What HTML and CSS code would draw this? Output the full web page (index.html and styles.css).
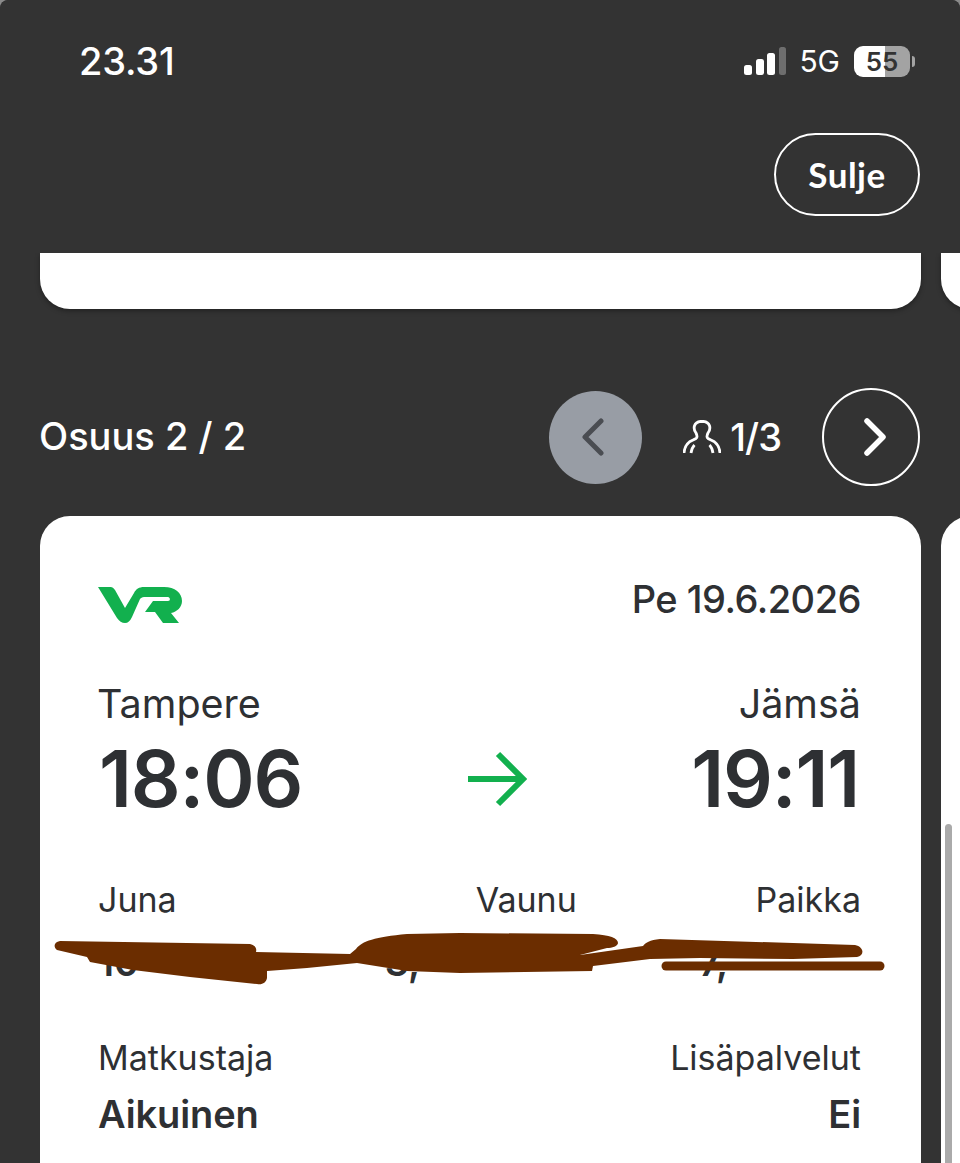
FILE: index.html
```html
<!DOCTYPE html>
<html lang="fi">
<head>
  <meta charset="utf-8">
  <title>Lippu</title>
  <link rel="stylesheet" href="styles.css">
</head>
<body>
  <header class="top">
    <div class="status">
      <span class="clock">23.31</span>
      <div class="status-icons">
        <svg class="signal" width="42" height="30" viewBox="0 0 42 30">
          <rect x="0" y="19" width="8" height="10" rx="2.5" fill="#fff"/>
          <rect x="12" y="13" width="8" height="16" rx="2.5" fill="#fff"/>
          <rect x="23" y="7" width="8" height="22" rx="2.5" fill="#fff"/>
          <rect x="35" y="1" width="7" height="28" rx="2.5" fill="#6e6e6e"/>
        </svg>
        <span class="net">5G</span>
        <div class="battery">
          <div class="battery-body"><span class="battery-level">55</span></div>
          <span class="battery-cap"></span>
        </div>
      </div>
    </div>
    <div class="top-actions">
      <button class="close" type="button">Sulje</button>
    </div>
  </header>

  <div class="slides slides-top">
    <div class="ticket-end"></div>
    <div class="ticket-end side"></div>
  </div>

  <div class="leg-head">
    <h2 class="leg-title">Osuus 2 / 2</h2>
    <div class="leg-nav">
      <button class="round prev" type="button">
        <svg width="24" height="38" viewBox="0 0 24 38"><path d="M20 3 L4 19 L20 35" fill="none" stroke="#4a4d52" stroke-width="5" stroke-linecap="round" stroke-linejoin="round"/></svg>
      </button>
      <div class="pax">
        <svg width="38" height="34" viewBox="0 0 38 34"><path d="M1 33 C1.5 26 5 22 10 20 L13 18.5 C15 17 14 15 13 13 C10 9 10 1.5 19 1.3 C28 1.5 28 9 25 13 C24 15 23 17 25 18.5 L28 20 C33 22 36.5 26 37 33 M8 33 C8.5 30 9.5 27 11.5 25 M30 33 C29.5 30 28.5 27 26.5 25" fill="none" stroke="#fff" stroke-width="2.8"/></svg>
        <span>1/3</span>
      </div>
      <button class="round next" type="button">
        <svg width="24" height="38" viewBox="0 0 24 38"><path d="M5 3 L21 19 L5 35" fill="none" stroke="#fff" stroke-width="5.5" stroke-linecap="round" stroke-linejoin="round"/></svg>
      </button>
    </div>
  </div>

  <div class="slides">
    <section class="ticket">
      <div class="row brand-row">
        <svg class="vr" width="84" height="36" viewBox="0 0 84 36">
          <path d="M0 0 H13 Q15 0 17 3 L27 21 L36 6 C38 2 41 0 46 0 H66 C77 0 84 6 84 14 C84 20 79 25 73 26 L81 36 H65 L57 25 H47 L55 14 H70 C73 14 72 10 70 10 H46 C44 10 43 11 42 12 L34 30 C32 34 30 36 27 36 C24 36 21 34 19 31 Z" fill="#12b04e"/>
        </svg>
        <span class="date">Pe 19.6.2026</span>
      </div>
      <div class="row names">
        <span>Tampere</span>
        <span>Jämsä</span>
      </div>
      <div class="row times">
        <span class="time">18:06</span>
        <svg class="arrow" width="60" height="56" viewBox="0 0 60 56"><path d="M1 28 H56 M31 3 L56 28 L31 53" fill="none" stroke="#12b04e" stroke-width="6"/></svg>
        <span class="time">19:11</span>
      </div>
      <div class="seats">
        <div class="seat"><span class="label">Juna</span><span class="value">10</span></div>
        <div class="seat mid"><span class="label">Vaunu</span><span class="value">3,</span></div>
        <div class="seat end"><span class="label">Paikka</span><span class="value">7,</span></div>
      </div>
      <div class="row extras">
        <div class="seat"><span class="label">Matkustaja</span><span class="value">Aikuinen</span></div>
        <div class="seat end"><span class="label">Lisäpalvelut</span><span class="value">Ei</span></div>
      </div>
    </section>
    <section class="ticket side"></section>
  </div>

  <svg class="scribble" width="960" height="70" viewBox="0 928 960 70">
    <g fill="#6b2d00">
      <path d="M60 941 L250 944 C255 945 257 948 256 952 L350 954 L356 949 C362 941 375 937 407 934 L460 933 L593 934 C610 935 618 938 618 943 C618 946 612 948 607 948 L580 955 L643 946 C645 943 650 940 660 939 L793 943 L855 945 C864 947 865 955 857 957 L793 959 L700 958 L650 959 L593 966 L592 971 L460 973 L407 971 L357 963 L307 968 L267 971 L267 978 C266 983 262 985 257 984 L190 977 L133 970 L90 962 L87 957 L57 950 C53 947 54 942 60 941 Z"/>
      <path d="M666 966 H880" stroke="#6b2d00" stroke-width="9" stroke-linecap="round"/>
    </g>
  </svg>
  <div class="scrollbar"></div>
</body>
</html>
```
FILE: styles.css
```css
* { box-sizing: border-box; }
html { background: #8a8a8a; }
html, body { height: 1163px; margin: 0; overflow: hidden; width: 960px; }
body { background: #333; border-radius: 8px 8px 0 0; color: #2e3033; font-family: Inter, "Liberation Sans", sans-serif; position: relative; }
button { background: none; cursor: pointer; font-family: inherit; padding: 0; }

.top { background: #333; border-radius: 8px 8px 0 0; display: flex; flex-direction: column; height: 253px; padding: 0 40px; position: relative; z-index: 2; }
.status { align-items: center; display: flex; height: 122px; justify-content: space-between; padding: 0 5px 0 39px; }
.clock { color: #fff; font-size: 38px; font-weight: 500; letter-spacing: -.2px; }
.status-icons { align-items: center; display: flex; gap: 13px; }
.net { color: #fff; font-size: 30px; font-weight: 400; }
.battery { align-items: center; display: flex; gap: 2px; margin-left: 1px; }
.battery-body { background: linear-gradient(90deg, #fff 0 55%, #a3a3a3 55%); border-radius: 9px; height: 31px; text-align: center; width: 56px; }
.battery-level { color: #333; display: block; font-size: 26px; font-weight: 600; line-height: 31px; }
.battery-cap { background: #a3a3a3; border-radius: 0 4px 4px 0; height: 11px; width: 3px; }
.top-actions { display: flex; justify-content: flex-end; margin-top: 11px; }
.close { border: 2.5px solid #fff; border-radius: 42px; color: #fff; font-family: Lato, sans-serif; font-size: 35px; font-weight: 700; height: 83px; letter-spacing: .5px; padding-bottom: 2px; width: 146px; }

.slides { display: flex; gap: 20px; padding-left: 40px; }
.ticket-end { background: #fff; border-radius: 0 0 30px 30px; box-shadow: 0 2px 5px rgba(0, 0, 0, .35); flex: 0 0 881px; height: 56px; }
.ticket-end.side { flex: 0 0 60px; }

.leg-head { align-items: center; color: #fff; display: flex; height: 98px; justify-content: space-between; margin-top: 79px; padding: 0 40px; }
.leg-title { font-size: 38px; font-weight: 500; margin: -2px 0 0 -1px; }
.leg-nav { align-items: center; display: flex; }
.round { align-items: center; border-radius: 50%; display: flex; justify-content: center; }
.prev { background: #989da5; border: 0; height: 93px; padding-right: 5px; width: 93px; }
.next { border: 2px solid #fff; height: 98px; padding-left: 5px; width: 98px; }
.pax { align-items: center; display: flex; font-size: 38px; font-weight: 500; gap: 9px; letter-spacing: -1px; margin: 0 41px 0 41px; }

.ticket { background: #fff; border-radius: 30px 30px 0 0; flex: 0 0 881px; height: 647px; margin-top: 30px; padding: 0 60px 0 57px; }
.ticket.side { flex: 0 0 60px; padding: 0; }
.row { display: flex; justify-content: space-between; }
.brand-row { align-items: center; height: 64px; margin-top: 52px; }
.vr { margin: 10px 0 0 1px; }
.date { font-size: 38px; font-weight: 500; letter-spacing: -.5px; margin-top: -2px; }
.names { font-size: 39.5px; margin-top: 48px; }
.names span { line-height: 48px; }
.times { align-items: center; height: 92px; margin-top: 5px; }
.time { font-size: 78px; font-weight: 600; letter-spacing: -1.2px; line-height: 92px; margin: 0 2px; }
.seats { display: grid; font-size: 34px; grid-template-columns: 1fr 1fr 1fr; margin-top: 53px; }
.seat { display: flex; flex-direction: column; }
.seat.mid { margin-left: 123px; }
.seat.end { align-items: flex-end; }
.seats .mid .value { margin-left: -90px; }
.seats .end .value { margin-right: 133px; }
.label { font-size: 34px; line-height: 44px; margin-left: 1px; }
.value { font-size: 38px; font-weight: 600; letter-spacing: -.1px; line-height: 46px; margin: 11px 0 0 1px; }
.seats .value { margin-top: 17px; }
.extras { margin-top: 51px; }

.scribble { left: 0; position: absolute; top: 928px; z-index: 3; }
.scrollbar { background: #aaa; border-radius: 4px 4px 0 0; bottom: 0; height: 339px; left: 945px; position: absolute; width: 7px; z-index: 3; }
```
